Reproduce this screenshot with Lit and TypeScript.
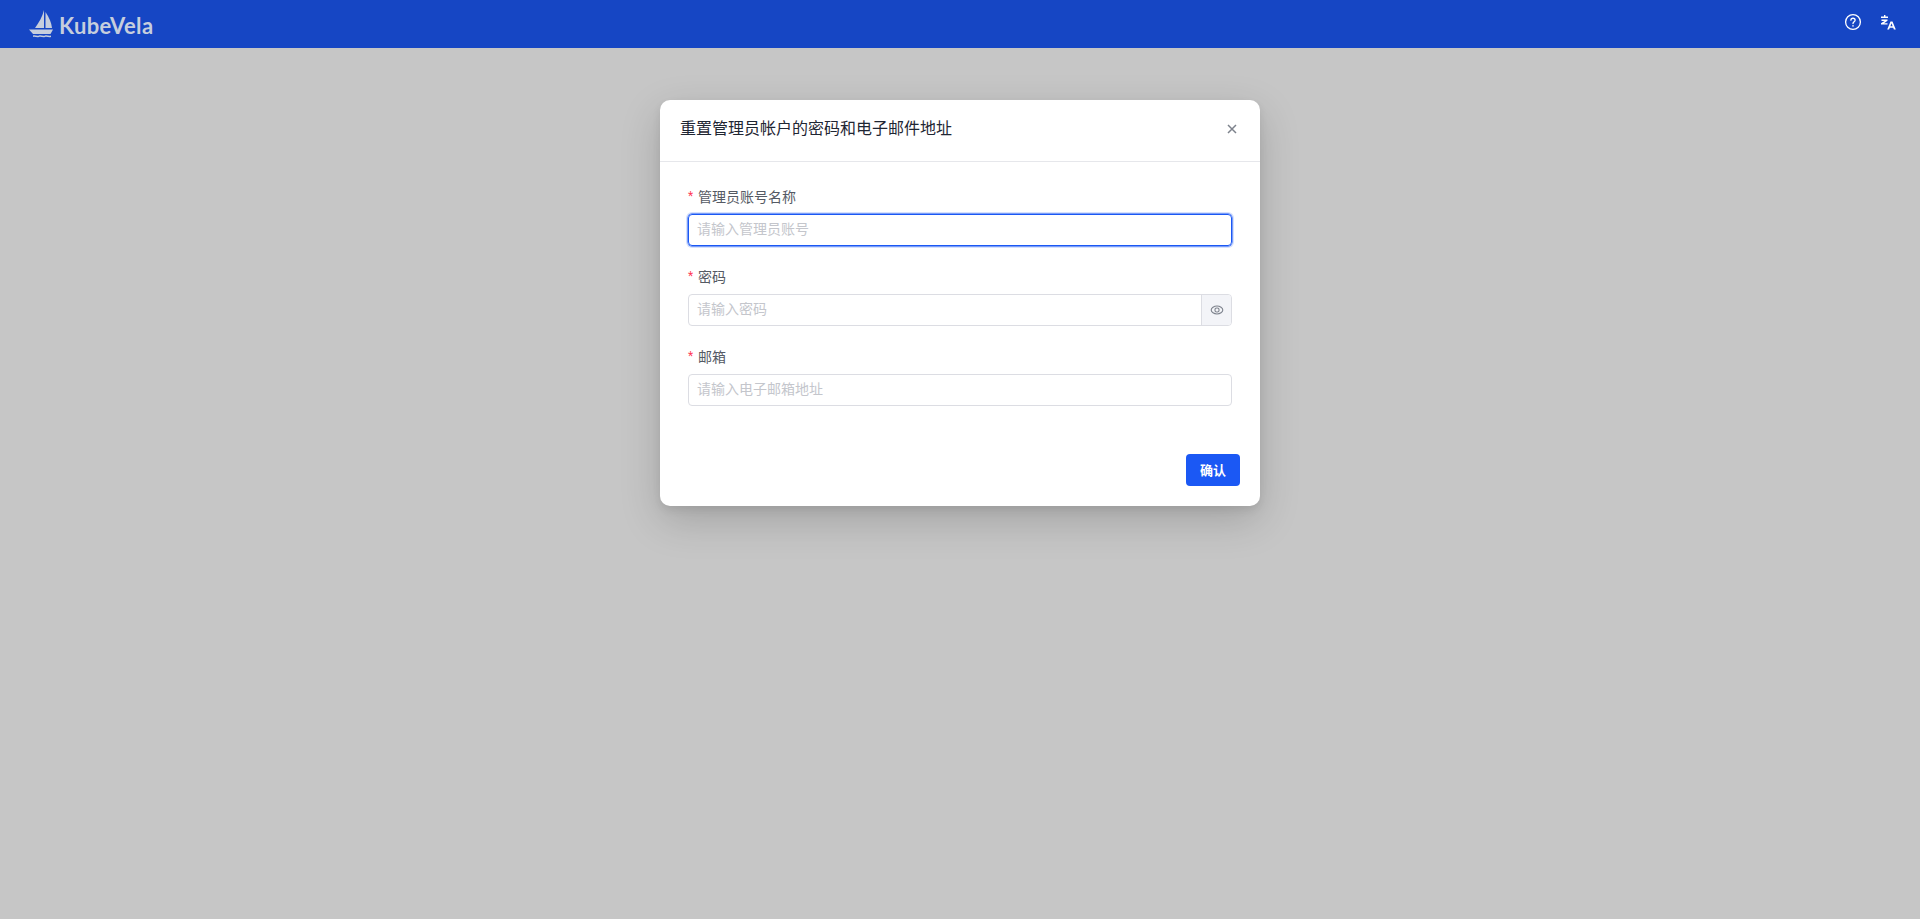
import { LitElement, html, css } from "lit";
import { customElement } from "lit/decorators.js";

@customElement("app-root")
export class AppRoot extends LitElement {
  static styles = css`
    :host { display: block; height: 919px; background: #c6c6c6; font-family: "Roboto", "Noto Sans CJK SC", sans-serif; overflow: hidden; }
    .nav { height: 48px; background: #1646c4; display: flex; align-items: center; justify-content: space-between; padding: 0 23px 0 29px; box-sizing: border-box; }
    .brand { display: flex; align-items: center; gap: 5px; color: #c6cedd; }
    .brand svg { display: block; }
    .brand span { font-family: "Lato", sans-serif; font-size: 22px; font-weight: 700; letter-spacing: 0.4px; line-height: 28px; margin-top: 3px; }
    .tools { display: flex; align-items: center; gap: 17px; margin-top: -4px; }
    .tools svg { display: block; }
    .main { display: flex; justify-content: center; padding-top: 52px; }
    .dialog { width: 600px; height: 406px; background: #fff; border-radius: 10px; box-shadow: 0 14px 40px rgba(0,0,0,.18), 0 4px 8px rgba(0,0,0,.08); display: flex; flex-direction: column; box-sizing: border-box; }
    .head { height: 62px; flex: none; box-sizing: border-box; border-bottom: 1px solid #e6e7eb; display: flex; align-items: center; justify-content: space-between; padding: 0 23px 3px 20px; }
    .title { font-size: 16px; color: #1f2633; line-height: 24px; }
    .close { display: block; }
    .body { padding: 25px 28px 0; display: flex; flex-direction: column; gap: 21px; }
    .field { display: flex; flex-direction: column; gap: 6px; }
    .label { font-size: 14px; line-height: 21px; color: #555a64; display: flex; align-items: center; height: 21px; }
    .star { color: #ff3b58; font-size: 12px; width: 10px; margin-top: -2px; }
    .control { display: flex; height: 32px; box-sizing: border-box; border: 1px solid #dcdde3; border-radius: 4px; overflow: hidden; }
    .control.focus { border-color: #1b58f4; box-shadow: 0 0 0 .5px #1b58f4, 0 0 0 2px rgba(27,88,244,.18); overflow: visible; }
    .ph { flex: 1; padding-left: 8px; font-size: 14px; line-height: 28px; color: #c4c6cc; }
    .addon { width: 29px; flex: none; background: #f3f4f8; border-left: 1px solid #dcdde3; display: flex; align-items: center; justify-content: center; }
    .foot { margin-top: auto; padding: 0 20px 20px; display: flex; justify-content: flex-end; }
    .btn { width: 54px; height: 32px; box-sizing: border-box; padding-bottom: 2px; border-radius: 4px; background: #1b58f4; color: #fff; font-size: 13px; font-weight: 700; display: flex; align-items: center; justify-content: center; }
  `;

  render() {
    return html`
      <div class="nav">
        <div class="brand">
          <svg width="25" height="28" viewBox="0 0 25 28" fill="currentColor">
            <path d="M15 0 L15 18 L6 18 C9.5 13 13.5 7 15 0 Z" />
            <path d="M16.5 2 C20 7 22.5 13 23 18 L16.5 18 Z" />
            <path d="M0 19.5 L24 19.5 L21.5 24 L4 24 Z" />
            <path d="M4 25.5 C6 24.7 8 26.5 10 25.5 C12 24.7 14 26.5 16 25.5 C18 24.7 20 26.5 22 25.5 V27 C20 28 18 26.2 16 27 C14 28 12 26.2 10 27 C8 28 6 26.2 4 27 Z" />
          </svg>
          <span>KubeVela</span>
        </div>
        <div class="tools">
          <svg width="18" height="18" viewBox="0 0 18 18" fill="none" stroke="#fff" stroke-width="1.3" stroke-linecap="round">
            <circle cx="9" cy="9" r="7.4" />
            <path d="M6.9 7.2 C6.9 4.6 11.1 4.6 11.1 7.2 C11.1 8.8 9 8.7 9 10.5" />
            <path d="M9 12.7 v.3" stroke-width="1.5" />
          </svg>
          <svg width="18" height="18" viewBox="0 0 18 18" fill="#fff">
            <path d="M5 2 h1.4 v1.6 H9 V5 H2 V3.6 h3 Z" />
            <path d="M2.5 6.5 h6 v1.3 L5 10.2 H8.5 v1.4 H2 v-1.3 L5.6 7.9 H2.5 Z" />
            <path d="M11.5 8.5 h2 L16.8 16.5 h-1.9 l-.7-1.8 h-3.4 l-.7 1.8 H8.2 Z M11.4 13.2 h2.2 l-1.1-2.9 Z" fill-rule="evenodd" />
          </svg>
        </div>
      </div>
      <div class="main">
        <div class="dialog">
          <div class="head">
            <span class="title">重置管理员帐户的密码和电子邮件地址</span>
            <svg class="close" width="10" height="10" viewBox="0 0 10 10" fill="none" stroke="#7d828c" stroke-width="1.5"><path d="M1 1 L9 9 M9 1 L1 9" /></svg>
          </div>
          <div class="body">
            <div class="field">
              <div class="label"><span class="star">*</span>管理员账号名称</div>
              <div class="control focus"><div class="ph">请输入管理员账号</div></div>
            </div>
            <div class="field">
              <div class="label"><span class="star">*</span>密码</div>
              <div class="control">
                <div class="ph">请输入密码</div>
                <div class="addon">
                  <svg width="14" height="14" viewBox="0 0 14 14" fill="none" stroke="#7d828c" stroke-width="1.1">
                    <path d="M1.2 7 C1.2 5 4 3 7 3 C10 3 12.8 5 12.8 7 C12.8 9 10 11 7 11 C4 11 1.2 9 1.2 7 Z" />
                    <rect x="5" y="5" width="4" height="4" rx="1.6" />
                  </svg>
                </div>
              </div>
            </div>
            <div class="field">
              <div class="label"><span class="star">*</span>邮箱</div>
              <div class="control"><div class="ph">请输入电子邮箱地址</div></div>
            </div>
          </div>
          <div class="foot"><div class="btn">确认</div></div>
        </div>
      </div>
    `;
  }
}
